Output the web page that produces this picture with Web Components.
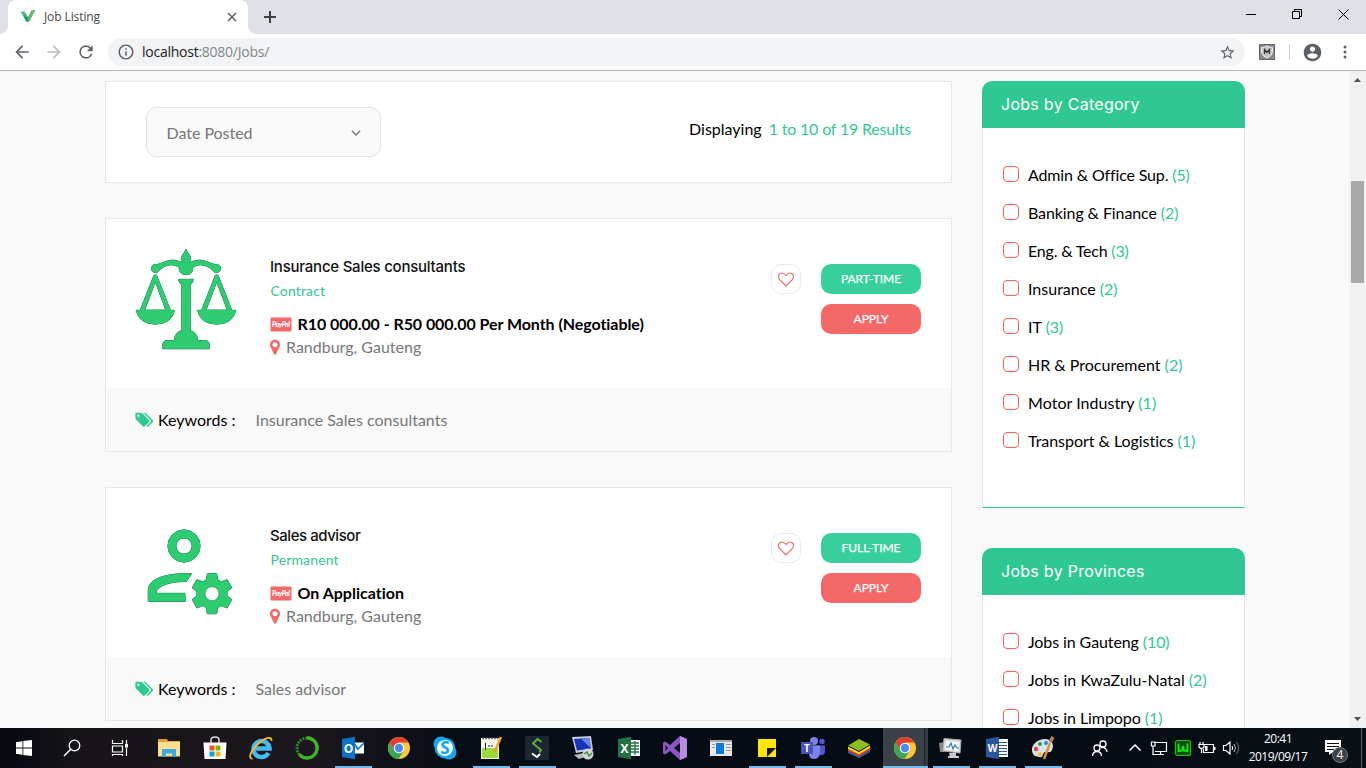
<!DOCTYPE html>
<html lang="en">
<head>
<meta charset="utf-8">
<title>Job Listing</title>
<style>
html,body{margin:0;height:100%;overflow:hidden}
body{font-family:Lato,sans-serif;background:#f9f9f9;font-variant-ligatures:none}
</style>
</head>
<body>
<job-desktop></job-desktop>
<script>
const G='#2ecc71', GD='#21834b';
const svg=(w,h,vb,inner)=>`<svg width="${w}" height="${h}" viewBox="${vb}" fill="none">${inner}</svg>`;
const define=(name,render)=>customElements.define(name,class extends HTMLElement{
  constructor(){super();this.attachShadow({mode:'open'});}
  connectedCallback(){this.shadowRoot.innerHTML='<style>*{box-sizing:border-box}svg{display:block;flex:none}</style>'+render(this);}
});

const outlined=s=>`<g fill="${GD}" stroke="${GD}" stroke-width="1">${s}</g><g fill="${G}">${s}</g>`;
const tooth=[0,60,120,180,240,300].map(a=>`<path transform="rotate(${a} 76 75.7)" d="M70 64 71.200 56.100Q71.300 55.600 71.800 55.600H80.200Q80.700 55.600 80.800 56.100L82 64Z"/>`).join('');
const pan=x=>`<path fill-rule="evenodd" d="M${x-1.500} 26.500Q${x} 24.800 ${x+1.500} 26.500L${x+15.200} 61.300H${x+19.200}Q${x+16} 75.200 ${x} 75.200T${x-19.200} 61.300H${x-15.200}ZM${x} 33 ${x-10.500} 61H${x+10.500}Z"/>`;
const art={
 scales:svg(102,102,'-1 -1 102 102',outlined(`<path d="M50 0C51 4 54.700 6 54.700 9.500 54.700 11.500 53.500 12.600 53 14 60 10 67 10.500 73 13.500L79 15.500A4.200 4.200 0 1 1 77 21.800C75.500 19.500 72 17.500 68 16.300 63 15.200 60 16.500 56.800 18.500V20.500A6.900 6.300 0 0 1 43.200 20.500V18.500C40 16.500 37 15.200 32 16.300 28 17.500 24.500 19.500 23 21.800A4.200 4.200 0 1 1 21 15.500L27 13.500C33 10.500 40 10 47 14 46.500 12.600 45.300 11.500 45.300 9.500 45.300 6 49 4 50 0Z"/>${pan(19.300)}${pan(80.700)}<path d="M42.600 30.300H57.400C57.400 34 54.200 35 54.200 37V81.500C58.500 82.500 61.500 86 61.700 91.500H69Q73.300 91.500 73.300 96V99.800H26.700V96Q26.700 91.500 31 91.500H38.300C38.500 86 41.500 82.500 45.800 81.500V37C45.800 35 42.600 34 42.600 30.300Z"/>`)),
 advisor:svg(102,102,'-1 -1 102 102',outlined(`<path fill-rule="evenodd" d="M48 11.800A16.200 16.200 0 1 0 48 44.200 16.200 16.200 0 1 0 48 11.800ZM48 20A8 8 0 1 1 48 36 8 8 0 1 1 48 20Z"/><path fill-rule="evenodd" d="M12.200 83.500V72C12.200 61 30 54.500 55.600 55.700L50.500 63.500C35 63.500 20.300 67.500 20.300 75.300H49L49.300 83.500Z"/>${tooth}<circle cx="76" cy="75.700" r="15.200"/>`)+`<circle cx="76" cy="75.700" r="7" fill="#fff" stroke="${GD}" stroke-width=".6"/>`)
};
const paypal=`<svg width="22" height="15" viewBox="0 0 22 15"><rect x=".5" y=".5" width="21" height="14" rx="1" fill="#f46868"/><text x="11" y="9.600" text-anchor="middle" textLength="18" font-family="Lato" font-size="7" font-weight="900" font-style="italic" fill="#fff">PayPal</text></svg>`;
const marker=svg(10,16,'0 64 1024 1638',`<path fill="#f46868" d="M768 640q0-106-75-181t-181-75-181 75-75 181 75 181 181 75 181-75 75-181zm256 0q0 109-33 179l-364 774q-16 33-47.500 52t-67.500 19-67.500-19-46.500-52l-365-774q-33-70-33-179 0-212 150-362t362-150 362 150 150 362z"/>`);
const tags=svg(18,16,'-40 64 1920 1700',`<path fill="#30c892" d="M448 448q0-53-37.500-90.500t-90.500-37.500-90.500 37.500-37.500 90.500 37.500 90.500 90.500 37.500 90.500-37.500 37.500-90.500zm1067 576q0 53-37 90l-491 492q-39 37-91 37-53 0-90-37l-715-716q-38-37-64.500-101t-26.500-117v-416q0-52 38-90t90-38h416q53 0 117 26.500t102 64.500l715 714q37 39 37 91zm384 0q0 53-37 90l-491 492q-39 37-91 37-36 0-59-14t-53-45l470-470q37-37 37-90 0-52-37-91l-715-714q-38-38-102-64.500t-117-26.500h224q53 0 117 26.500t102 64.500l715 714q37 39 37 91z"/>`);

/* ---- browser frame ---- */
const mat=(d,c='#5f6368',s=20)=>svg(s,s,'0 0 24 24',`<path fill="${c}" d="${d}"/>`);
define('browser-frame',()=>`<style>
:host{display:block;height:71px;font-family:"Open Sans",sans-serif}
.tabs{height:34px;background:#dee1e6;display:flex;align-items:center}
.tab{height:34px;width:240px;margin-left:8px;background:#fff;border-radius:8px 8px 0 0;display:flex;align-items:center;padding:0 10px 0 12px;color:#45484d;font-size:12px;letter-spacing:-.1px;position:relative}
.tab::before,.tab::after{content:"";position:absolute;bottom:0;width:8px;height:8px}
.tab::before{left:-8px;background:radial-gradient(circle at 0 0,#dee1e6 7.500px,#fff 8px)}
.tab::after{right:-8px;background:radial-gradient(circle at 100% 0,#dee1e6 7.500px,#fff 8px)}
.tab span{flex:1;margin:-1px 0 0 8px}
.plus{margin-left:15px}
.win{margin-left:auto;display:flex;gap:36px;padding-right:17px;align-items:center;margin-top:-6px}
.bar{height:36px;background:#fff;display:flex;align-items:center}
.nav{display:flex;gap:12px;padding-left:12px}
.omni{width:1137px;height:28px;border-radius:14px;background:#f1f3f4;margin-left:12px;display:flex;align-items:center;padding:0 9px 0 9px;font-size:14px;color:#80868b}
.omni b{font-weight:400;color:#202124}.omni span{flex:1;margin:-1px 0 0 7px;letter-spacing:-.25px}
.sep{width:1px;height:16px;background:#cfd1d4;margin:0 12px 0 14px}
.line{height:1px;background:#b4b4b4}
.shield{margin-left:14px}.more{margin-left:14px}
</style>
<div class="tabs"><div class="tab">${svg(16,16,'0 0 16 16','<path fill="#54b48d" d="M.5 2.500H4.500L8 8 11 2C12 .8 14 1 15 1L9.500 12Q8 13.500 6 12Z"/><path fill="#6cbb62" d="M7.500 10 11 2.500Q12.500 .6 15.500 1L9.500 12Z"/><path fill="#12aa6d" d="M3.500 7 8 8 9 12.200Q7.500 13.300 6 12.200Z"/><path fill="#eee" d="M5 14.500H10V15.500H5Z"/>')}<span>Job Listing</span>${svg(12,12,'0 0 12 12','<path stroke="#5f6368" stroke-width="1.600" d="M2 2 10 10M10 2 2 10"/>')}</div>
<div class="plus">${svg(14,14,'0 0 14 14','<path stroke="#3c4043" stroke-width="2" d="M7 1V13M1 7H13"/>')}</div>
<div class="win">${svg(10,10,'0 0 10 10','<path stroke="#000" d="M0 5.500H10"/>')}${svg(10,10,'0 0 10 10','<path stroke="#000" d="M.5 2.500H7.500V9.500H.5ZM2.500 2.500V.5H9.500V7.500H7.500"/>')}${svg(11,11,'0 0 11 11','<path stroke="#000" d="M.5 .5 10.500 10.500M10.500 .5 .5 10.500"/>')}</div></div>
<div class="bar"><div class="nav">${mat('M20 11H7.830l5.590-5.590L12 4l-8 8 8 8 1.410-1.410L7.830 13H20v-2z')}${mat('M4 11h12.170l-5.590-5.590L12 4l8 8-8 8-1.410-1.410L16.170 13H4v-2z','#babcbe')}${mat('M17.650 6.350A7.958 7.958 0 0 0 12 4a8 8 0 1 0 7.730 10h-2.080A6 6 0 1 1 12 6c1.660 0 3.140.690 4.220 1.780L13 11h7V4l-2.350 2.350z')}</div>
<div class="omni">${mat('M11 17h2v-6h-2v6zm1-15C6.480 2 2 6.480 2 12s4.480 10 10 10 10-4.480 10-10S17.520 2 12 2zm0 18c-4.410 0-8-3.590-8-8s3.590-8 8-8 8 3.590 8 8-3.590 8-8 8zM11 9h2V7h-2v2z','#5f6368',18)}<span><b>localhost</b>:8080/Jobs/</span>${mat('M22 9.240l-7.190-.620L12 2 9.190 8.630 2 9.240l5.460 4.730L5.820 21 12 17.270 18.180 21l-1.630-7.030L22 9.240zM12 15.400l-3.760 2.270 1-4.280-3.320-2.880 4.380-.380L12 6.100l1.710 4.040 4.380.380-3.320 2.880 1 4.280L12 15.400z','#5f6368',17)}</div>
<div class="shield">${svg(16,16,'0 0 16 16','<path fill="#8a8a8a" d="M0 0H16V16H0Z"/><path stroke="#666" d="M.5 .5H15.500V15.500H.5Z"/><path fill="#c4c4c4" stroke="#eee" d="M2.500 3.500Q5.500 3.500 8 2 10.500 3.500 13.500 3.500V8Q13 12 8 14 3 12 2.500 8Z"/><path stroke="#333" stroke-width="1.200" d="M5.500 10V5.500L8 8.500 10.500 5.500V10"/>')}</div><div class="sep"></div>
${mat('M12 2C6.480 2 2 6.480 2 12s4.480 10 10 10 10-4.480 10-10S17.520 2 12 2zm0 3c1.660 0 3 1.340 3 3s-1.340 3-3 3-3-1.340-3-3 1.340-3 3-3zm0 14.200c-2.500 0-4.710-1.280-6-3.220.030-1.990 4-3.080 6-3.080 1.990 0 5.970 1.090 6 3.080-1.290 1.940-3.500 3.220-6 3.220z','#5a5f65',21)}
<div class="more">${svg(16,16,'0 0 16 16','<g fill="#5f6368"><circle cx="8" cy="3" r="1.500"/><circle cx="8" cy="8" r="1.500"/><circle cx="8" cy="13" r="1.500"/></g>')}</div></div><div class="line"></div>`);

/* ---- page pieces ---- */
define('filter-bar',()=>`<style>
:host{display:flex;box-sizing:border-box;height:102px;background:#fff;border:1px solid #e8e8e8;padding:0 40px;align-items:center;justify-content:space-between;font-size:16px}
.sel{width:235px;height:50px;border:1px solid #e2e2e2;border-radius:10px;background:#f9f9f9;color:#777;display:flex;align-items:center;justify-content:space-between;padding:1px 19px 0 19.500px;letter-spacing:-.03px}
.r{margin-top:-8px;color:#000;white-space:pre}.r b{font-weight:400;color:#30c892;margin-left:7px;letter-spacing:-.18px}
</style><div class="sel">Date Posted${svg(10,8,'0 0 10 8','<path stroke="#777" stroke-width="1.300" d="M.8 1.800 5 6 9.200 1.800"/>')}</div><div class="r">Displaying<b>1 to 10 of 19 Results</b></div>`);

define('pill-button',e=>`<style>
:host{display:flex;box-sizing:border-box;width:100px;height:30px;border-radius:10px;align-items:center;justify-content:center;background:${e.getAttribute('tone')==='red'?'#f46868':'#37d09c'};color:#fff;font-size:12px;letter-spacing:-.05px;padding-bottom:2px;-webkit-text-stroke:.25px #fff}
</style><slot></slot>`);

define('job-card',e=>`<style>
:host{display:block;box-sizing:border-box;height:234px;background:#fff;border:1px solid #e8e8e8}
.body{height:169px;display:flex;padding:29px 30px 0 29px}
.info{margin-left:33px;padding-top:9px;flex:1;white-space:nowrap}
h3{margin:0;font:500 15px/20px Inter,sans-serif;letter-spacing:${e.getAttribute('spacing')}px;color:#111}
.type{font-size:14px;line-height:20px;color:#30c892;margin:4px 0 0 .5px;letter-spacing:.14px}
.pay{display:flex;align-items:center;gap:5px;font-size:16px;font-weight:700;line-height:22px;color:#000;margin-top:12px}
.pay span{letter-spacing:${e.getAttribute('payspacing')}px;margin-left:.5px}
.loc{display:flex;align-items:center;gap:6px;font-size:16px;line-height:24px;color:#777}
.heart{width:30px;height:30px;border:1px solid #ebebeb;border-radius:10px;display:flex;align-items:center;justify-content:center;margin:16px 20px 0 0}
.btns{display:flex;flex-direction:column;gap:10px;margin-top:16px}
.kw{height:63px;background:#f9f9f9;display:flex;align-items:center;padding:1px 29px 0;font-size:16px;color:#000}
.kw span{margin-left:5px;margin-top:-1px}.kw ::slotted(*){margin-left:20px;margin-top:-1px;color:#777}
</style><div class="body">${art[e.getAttribute('icon')]}<div class="info"><h3>${e.getAttribute('heading')}</h3><div class="type">${e.getAttribute('type')}</div><div class="pay">${paypal}<span>${e.getAttribute('pay')}</span></div><div class="loc">${marker}<span>${e.getAttribute('place')}</span></div></div>
<div class="heart">${svg(16,15,'0 0 16 15','<path stroke="#f46868" stroke-width="1.200" d="M8 14 1.700 7.700C-.5 5 .5 1 4 1 6 1 7 2 8 3.500 9 2 10 1 12 1 15.500 1 16.500 5 14.300 7.700Z"/>')}</div><div class="btns"><pill-button>${e.getAttribute('time')}</pill-button><pill-button tone="red">APPLY</pill-button></div></div>
<div class="kw">${tags}<span>Keywords :</span><slot></slot></div>`);

define('check-row',e=>`<style>
:host{display:flex;height:38px;align-items:center;font-size:16px;color:#000;white-space:pre;letter-spacing:${e.getAttribute('spacing')}px}
i{width:16px;height:16px;border:1px solid #ff5b5b;border-radius:4px;margin:0 9px 2px 0}b{font-weight:400;color:#30c892}
span{margin-top:-2px}
</style><i></i><span><slot></slot><b> (${e.getAttribute('count')})</b></span>`);

define('side-widget',e=>`<style>
:host{display:block;width:263px;flex:none}
h4{margin:0;height:47px;background:#30c892;border-radius:10px 10px 0 0;color:#fff;font:400 16px/46px Inter,sans-serif;padding-left:19px;letter-spacing:.28px}
div{background:#fff;border:1px solid #e8e8e8;border-top:0;border-bottom-color:#30c892;height:380px;padding:28px 20px 0}
</style><h4>${e.getAttribute('heading')}</h4><div><slot></slot></div>`);

define('job-page',()=>{
const row=([t,c,s=0])=>`<check-row count="${c}" spacing="${s}">${t}</check-row>`;
return `<style>
:host{display:flex;height:657px;overflow:hidden;background:#f9f9f9}
.content{flex:1;display:flex;gap:30px;padding:10px 0 0 105px}
main{width:847px;display:flex;flex-direction:column;gap:35px}
aside{display:flex;flex-direction:column;gap:40px}
.sb{width:17px;background:#f1f1f1;display:flex;flex-direction:column;align-items:center;padding:7px 0 7px}
.thumb{width:13px;height:102px;background:#a8a8a8;margin-top:99px}
.sb svg:last-child{margin-top:auto}
</style><div class="content"><main><filter-bar></filter-bar>
<job-card icon="scales" spacing="-.23" payspacing="-.06" heading="Insurance Sales consultants" type="Contract" pay="R10 000.00 - R50 000.00 Per Month (Negotiable)" place="Randburg, Gauteng" time="PART-TIME"><span>Insurance Sales consultants</span></job-card>
<job-card icon="advisor" spacing="-.45" payspacing="0" heading="Sales advisor" type="Permanent" pay="On Application" place="Randburg, Gauteng" time="FULL-TIME"><span>Sales advisor</span></job-card></main>
<aside><side-widget heading="Jobs by Category">${[['Admin &amp; Office Sup.',5,-.15],['Banking &amp; Finance',2,-.1],['Eng. &amp; Tech',3,-.2],['Insurance',2],['IT',3],['HR &amp; Procurement',2],['Motor Industry',1,.05],['Transport &amp; Logistics',1,-.04]].map(row).join('')}</side-widget>
<side-widget heading="Jobs by Provinces">${[['Jobs in Gauteng',10,-.1],['Jobs in KwaZulu-Natal',2],['Jobs in Limpopo',1,-.06]].map(row).join('')}</side-widget></aside></div>
<div class="sb">${svg(7,4,'0 0 7 4','<path fill="#505050" d="M0 4 3.500 0 7 4Z"/>')}<div class="thumb"></div>${svg(7,4,'0 0 7 4','<path fill="#505050" d="M0 0 3.500 4 7 0Z"/>')}</div>`;});

/* ---- taskbar ---- */
const chrome='<circle cx="12" cy="12" r="11" fill="#fcc934"/><path fill="#e0402f" d="M12 12 2.500 6.500A11 11 0 0 1 21.500 6.500H12Z"/><path fill="#e0402f" d="M2.500 6.500 7 14.500 12 7Z"/><path fill="#34a853" d="M2.500 6.500A11 11 0 0 0 11.500 23L16.800 14.500 12 17 7.200 14.800Z"/><circle cx="12" cy="12" r="5.300" fill="#fff"/><circle cx="12" cy="12" r="4.200" fill="#4a8af4"/>';
const letter=(x,y,t,s,c='#fff')=>`<text x="${x}" y="${y}" text-anchor="middle" font-family="Open Sans" font-weight="700" font-size="${s}" fill="${c}">${t}</text>`;
const T={
start:'<path fill="#fff" d="M4 6.200 10.500 5.200V11.600H4ZM11.300 5.100 20 4V11.600H11.300ZM4 12.400H10.500V18.800L4 17.800ZM11.300 12.400H20V20L11.300 18.900Z"/>',
search:'<circle cx="14.500" cy="9.500" r="5.300" stroke="#fff" stroke-width="1.300"/><path stroke="#fff" stroke-width="1.500" d="M10.700 13.300 4 20"/>',
view:'<path stroke="#fff" stroke-width="1.200" d="M4.500 4V7.500H14.500V4M4.500 10H14.500V16H4.500ZM4.500 20V18.500H14.500V20M18.500 4V8M18.500 12V20"/><path fill="#fff" d="M17 8H20V11.500H17Z"/>',
folder:'<path fill="#dfa72c" d="M1 3H10L11 5H23V7H1Z"/><path fill="#fddf8c" d="M1 6H23V20.500H1Z"/><path fill="#ef933a" d="M3 3.500H8V5H3Z"/><path fill="#38a8e8" d="M5 13H19V21H15V17.500H9V21H5Z"/>',
store:'<path stroke="#ddd" stroke-width="1.500" d="M8 7V4Q8 1 12 1T16 4V7"/><path fill="#fff" d="M.5 6.500H23.500L22.500 23H1.500Z"/><path fill="#f25022" d="M6.500 9.500H11.500V14.500H6.500Z"/><path fill="#7fba00" d="M12.500 9.500H17.500V14.500H12.500Z"/><path fill="#00a4ef" d="M6.500 15.500H11.500V20.500H6.500Z"/><path fill="#ffb900" d="M12.500 15.500H17.500V20.500H12.500Z"/>',
ie:'<path stroke="#45b9f2" stroke-width="4.500" d="M6 12.500H20.500A8 8 0 1 0 19.500 17"/><path stroke="#f3bd27" stroke-width="1.800" d="M3.500 22.500C-1 23 1 16 8 9S23-1 22.500 5"/>',
conda:'<circle cx="12" cy="12" r="10" stroke="#238a25" stroke-width="3" stroke-dasharray="2 1"/><path stroke="#43b02a" stroke-width="3.400" d="M12 2A10 10 0 1 1 4.500 18.500"/>',
outlook:'<path fill="#fff" d="M13 6.500H23V17.500H13Z"/><path stroke="#0a72c8" stroke-width="1.500" d="M13 7 17 13 23 7M15 11 17 13.500"/><path fill="#0a72c8" d="M1 3 14 .7V23.300L1 21Z"/>'+letter(7.500,16.500,'O',12),
chrome,
skype:'<circle cx="8" cy="8" r="7.500" fill="#12a5f4"/><circle cx="16" cy="16" r="7.500" fill="#12a5f4"/><circle cx="12" cy="12" r="10.300" fill="#12a5f4"/><circle cx="12" cy="12" r="8" fill="#fff" opacity=".95"/>'+letter(12,18,'S',17,'#12a5f4'),
npp:'<path fill="#f5f5ee" d="M2 2H20V23H2Z"/><path fill="#9bdc36" d="M3 12H19V22H3Z"/><path stroke="#777" stroke-dasharray="2 1" stroke-width="1.500" d="M3 2.500H19"/><path stroke="#222" d="M6.500 7V14M9 10H11M12 10H14"/><path stroke="#f0a12c" stroke-width="2.500" d="M22 1 15.500 16"/>',
cmder:'<rect width="24" height="24" rx="1.500" fill="#1c2731"/><path stroke="#5cb043" stroke-width="2" d="M16.500 6 12.500 3 8 7.500 16 14 14.500 16.500"/><path stroke="#fff" stroke-width="2" d="M7 17.500 12 21 15 18"/>',
putty:'<path fill="#c8ccda" d="M1 1 20 0 22 14 5 17Z"/><path fill="#1933b8" d="M3 3 18.500 2 20 12.500 6 14.500Z"/><path fill="#6f86e6" d="M10 2.500 18.500 2 20 12.500Z"/><path fill="#bbb" d="M3 19 13 17 17 20 8 23Z"/><circle cx="17" cy="18" r="5.500" fill="#d5d5d5"/><path stroke="#30943a" stroke-width="1.500" d="M13 18 16 16 18 20 21 17"/>',
excel:'<path fill="#fff" d="M12 4H23V20H12Z"/><path stroke="#217346" stroke-width="1.300" d="M14 7H22M14 10H22M14 13H22M14 16H22M18 5V19"/><path fill="#217346" d="M1 3 14 .7V23.300L1 21Z"/>'+letter(7.500,16.500,'X',12),
vs:'<path fill="#8c56c5" fill-rule="evenodd" d="M17 0 24 3V21L17 24 7 15 2.500 18.500 0 17.500V6.500L2.500 5.500 7 9ZM17 7 11 12 17 17ZM2.500 9V15L5 12Z"/><path fill="#b78be5" d="M17 0 24 3V21L17 24Z"/>',
win:'<path fill="#e9e9e9" d="M1 4H23V20H1Z"/><path fill="#aaa" d="M1 4H23V6H1Z"/><path fill="#0b7bdb" d="M7 7H15V18H7Z"/><path stroke="#999" d="M17 8.500H22M17 11.500H22M17 14.500H22M3 8.500H6M3 11.500H6"/>',
sticky:'<path fill="#ffe500" d="M3 3H21V21H3Z"/><path fill="#121212" d="M12 12H21L12 21Z"/>',
teams:'<circle cx="13" cy="5" r="4" fill="#7b83eb"/><circle cx="21" cy="5.500" r="2.700" fill="#5059c9"/><path fill="#5059c9" d="M14 9.500H24V16Q23 20 18 19Z"/><path fill="#7b83eb" d="M8 9.500H19V17Q18 23 13 23T8 18Z"/><path fill="#4b53bc" d="M0 6H12V18H0Z"/>'+letter(6,15.500,'T',10),
blue:'<path fill="#1f6bb8" d="M1 15 12 20.500 23 14V16L12 22 1 17Z"/><path fill="#e8392b" d="M1 13 12 18.500 23 12V14L12 20.500 1 15Z"/><path fill="#ffd51f" d="M1 10.500 12 16 23 9.500V12L12 18.500 1 13Z"/><path fill="#8bc01f" d="M1 9.500 12 3 23 8.500 12 15Z"/>',
perf:'<path fill="#888" d="M0 7 5 6V16H1Z"/><path fill="#ddd" stroke="#aaa" d="M5 2.500 22 4 21 17 4 15Z"/><path fill="#f6f6f6" d="M7 5 20 6V15L6.500 13.500Z"/><path stroke="#2383b8" stroke-width="1.200" d="M7 11H10L12 7 14 13 16 9 18 12H20"/><path fill="#ccc" d="M10 17H17V20H20V22H9V20H11Z"/>',
word:'<path fill="#fff" d="M12 3H23V21H12Z"/><path stroke="#2b579a" stroke-width="1.200" d="M14 6.500H22M14 9.500H22M14 12.500H22M14 15.500H22M14 18.500H22"/><path fill="#2b579a" d="M1 3 14 .7V23.300L1 21Z"/>'+letter(7.500,16,'W',10),
paint:'<path fill="#d4e3ec" d="M1 15C0 8 7 3 14 3 20 3 24 8 21 14 19 18 17 15 14 16S13 22 8 21 2 19 1 15Z"/><circle cx="5" cy="13" r="2.200" fill="#e34234"/><circle cx="9" cy="8" r="2" fill="#3b9b35"/><circle cx="15" cy="7" r="2" fill="#3286d4"/><circle cx="9" cy="18" r="2" fill="#f4c51d"/><path stroke="#e58e2c" stroke-width="2.400" d="M13 23 19 7"/><path stroke="#b58353" stroke-width="3.500" d="M19 6 22 1"/>',
people:'<g stroke="#fff" stroke-width="1.300"><circle cx="15" cy="8" r="3"/><circle cx="9" cy="12" r="3"/><path d="M4.500 20Q5 15.500 9 15.500T13.500 20M13 11.500Q18 10.500 19 16"/></g>',
up:'<path stroke="#fff" stroke-width="1.500" d="M6.500 14.500 12 9 17.500 14.500"/>',
net:'<path stroke="#fff" stroke-width="1.200" d="M8 6.500H19.500V15.500H8M13.500 15.500V18.500M10 18.500H17M4.500 6H8V10H4.500ZM6 10V18.500H10"/>',
w:'<rect x="4.500" y="4.500" width="15" height="15" rx="2" fill="#064d06" stroke="#12c512" stroke-width="1.200"/><path stroke="#15e015" stroke-width="2" d="M7.500 7.500V15L11 14.500 12 10 13 14.500 16.500 15V7.500"/>',
bat:'<path stroke="#fff" stroke-width="1.200" d="M9 8.500H18.500V16.500H8.500V13M5 6V8M8 6V8M4 8.500H9V11Q6.500 14 4 11ZM6.500 12V17"/><path fill="#fff" d="M10 10H12.500V15H10ZM19 11H20.500V14H19Z"/>',
vol:'<path stroke="#fff" stroke-width="1.200" d="M4.500 9.500H7L11 6V18L7 14.500H4.500ZM13 10Q14.500 12 13 14"/><path stroke="#bbb" d="M15 8Q18 12 15 16"/><path stroke="#777" d="M17.500 6Q21.500 12 17.500 18"/>'
};
define('task-icon',e=>`<style>
:host{display:flex;box-sizing:border-box;width:var(--w,46px);height:40px;align-items:center;justify-content:center;flex:none}
:host([run]){background:linear-gradient(#76b9ed,#76b9ed) 5px 100%/37px 2px no-repeat}
:host([active]){background:linear-gradient(#76b9ed,#76b9ed) 1px 100%/45px 2px no-repeat,linear-gradient(90deg,transparent 1px,#3b4148 1px 42px,#20262b 42px 43px,#343a40 43px)}
</style>${svg(24,24,'0 0 24 24',T[e.getAttribute('name')])}`);
define('task-bar',()=>`<style>
:host{display:flex;height:40px;background:linear-gradient(90deg,#04080f 0,#171419 80px,#1b171d 310px,#070d14 460px,#060c13 1100px,#091016);color:#fff}
.sys{--w:48px;display:flex;width:146px}.tray{--w:24px;display:flex}
.first{margin-left:11px}
.clock{width:68px;font:12px/18px "Open Sans",sans-serif;text-align:center;padding-top:2px;letter-spacing:-.5px;margin-left:1px}
.note{position:relative;margin:11px 0 0 12px;width:26px}
.note b{position:absolute;left:8px;top:8px;width:16px;height:16px;border-radius:50%;background:#3c4146;border:1px solid #777;font:12px/14px "Open Sans",sans-serif;text-align:center;box-sizing:border-box}
.edge{width:1px;background:#5d6165;margin-left:auto;margin-right:4px}
</style><div class="sys"><task-icon name="start"></task-icon><task-icon name="search"></task-icon><task-icon name="view"></task-icon></div>
${['folder','store','ie','conda','outlook*','chrome','skype','npp*','cmder*','putty','excel','vs','win','sticky*','teams*','blue','chrome!','perf*','word*','paint*'].map(n=>`<task-icon name="${n.replace(/[*!]/,'')}"${n.endsWith('*')?' run':n.endsWith('!')?' active':''}></task-icon>`).join('')}
<task-icon class="first" name="people"></task-icon><div class="tray"><task-icon name="up"></task-icon><task-icon name="net"></task-icon><task-icon name="w"></task-icon><task-icon name="bat"></task-icon><task-icon name="vol"></task-icon></div>
<div class="clock">20:41<br>2019/09/17</div><div class="note">${svg(18,18,'0 0 18 18','<path fill="#fff" d="M1 1H17V13H9L5 16V13H1Z"/><path stroke="#111" d="M3 4.500H15M3 7.500H15M3 10.500H10"/>')}<b>4</b></div><div class="edge"></div>`);

define('job-desktop',()=>`<style>:host{display:flex;flex-direction:column;height:768px;width:1366px}</style><browser-frame></browser-frame><job-page></job-page><task-bar></task-bar>`);
</script>
</body>
</html>
